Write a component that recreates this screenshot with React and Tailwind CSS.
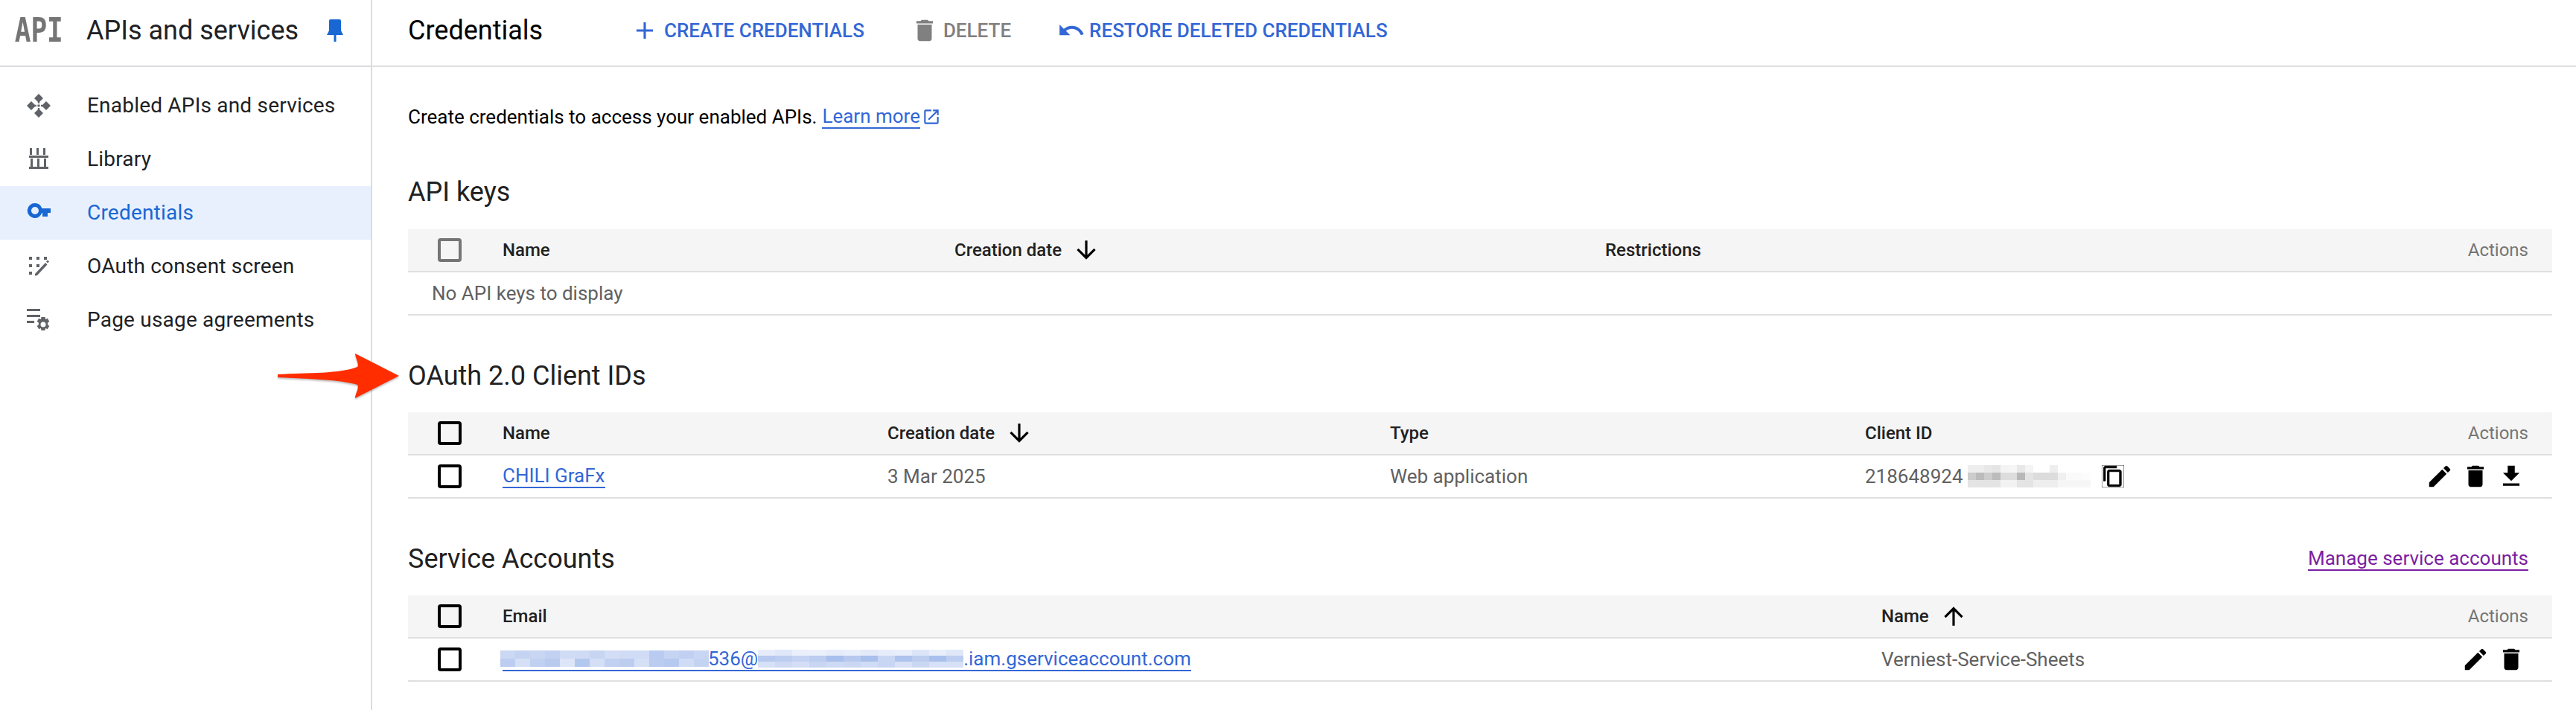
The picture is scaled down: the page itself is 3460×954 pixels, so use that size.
import React from "react";
import { MdAdd, MdDelete, MdUndo, MdEdit, MdFileDownload, MdContentCopy, MdArrowDownward, MdArrowUpward, MdOpenInNew } from "react-icons/md";

const font = "[font-family:Roboto,'Liberation_Sans',sans-serif]";

function EnabledIcon() {
  return (
    <svg viewBox="0 0 32 32" className="w-8 h-8" fill="#5f6368">
      <path d="M16 0l6 6-6 6-6-6zM16 20l6 6-6 6-6-6zM6 10l6 6-6 6-6-6zM26 10l6 6-6 6-6-6z" />
      <rect x="14.5" y="14.5" width="3" height="3" />
      <rect x="14.8" y="10.5" width="2.4" height="2.4" />
      <rect x="14.8" y="19" width="2.4" height="2.4" />
      <rect x="10.5" y="14.8" width="2.4" height="2.4" />
      <rect x="19" y="14.8" width="2.4" height="2.4" />
    </svg>
  );
}
function LibraryIcon() {
  return (
    <svg viewBox="0 0 32 32" className="w-8 h-8" fill="#5f6368">
      <path d="M4 1h3v9H4zM13 1h3v9h-3zM22 1h3v9h-3zM3 11h26v3H3zM5 15h3v12H5zM14 15h3v12h-3zM23 15h3v12h-3zM3 26h26v3H3z" />
    </svg>
  );
}
function KeyIcon() {
  return (
    <svg viewBox="0 0 32 32" className="w-8 h-8" fill="#1967d2">
      <path fillRule="evenodd" d="M11 4a10 10 0 0 1 9.300 7H32v6h-4v5h-7v-5h-.7A10 10 0 1 1 11 4zm0 5a5 5 0 1 0 0 10 5 5 0 0 0 0-10z" transform="translate(0 -1)" />
    </svg>
  );
}
function OauthIcon() {
  return (
    <svg viewBox="0 0 32 32" className="w-8 h-8" fill="#5f6368">
      <path d="M3 3h4v4H3zM13 3h4v4h-4zM23 3h4v4h-4zM3 13h4v4H3zM13 13h4v4h-4zM3 23h4v4H3zM11 26l14-15 2.500 2.500L14 28l-3 .5zM26 9.500l2-2 2 2-2 2z" />
    </svg>
  );
}
function UsageIcon() {
  return (
    <svg viewBox="0 0 32 32" className="w-8 h-8" fill="#5f6368">
      <path d="M0 1h18v3H0zM0 9h18v3H0zM0 17h10v3H0z" />
      <path fillRule="evenodd" d="M19.500 12h5l.6 3 2.700-1.200 2.500 4.200-2.300 1.800.2 1.200-.2 1.200 2.300 1.800-2.500 4.200-2.700-1.200-.6 3h-5l-.6-3-2.700 1.200-2.500-4.200 2.300-1.800-.2-1.200.2-1.200-2.300-1.800 2.500-4.200 2.700 1.200zm2.500 6.500a3.500 3.500 0 1 0 0 7 3.500 3.500 0 0 0 0-7z" />
    </svg>
  );
}
function PinIcon() {
  return (
    <svg viewBox="0 0 22 30" className="w-[22px] h-[30px]" fill="#1967d2">
      <path d="M5 0h12a2 2 0 0 1 2 2v13l3 6H0l3-6V2a2 2 0 0 1 2-2zM9.500 21h3v9h-3z" />
    </svg>
  );
}

function Checkbox({ gray }) {
  return <div className={"w-8 h-8 rounded-[4px] border-[4px] bg-transparent " + (gray ? "border-[#757575]" : "border-black")} />;
}

function Mosaic({ cols, cell, cellH, colors, className }) {
  return (
    <span className={"inline-grid shrink-0 " + (className || "")} style={{ gridTemplateColumns: `repeat(${cols}, ${cell}px)`, gridAutoRows: `${cellH}px` }}>
      {colors.map((c, i) => (
        <span key={i} style={{ backgroundColor: c }} />
      ))}
    </span>
  );
}

function NavRow({ icon, label, active }) {
  return (
    <div className={"flex items-center h-[72px] " + (active ? "bg-[#e8f0fe] text-[#1967d2]" : "text-[#202124]")}>
      <div className="w-[117px] pl-[36px] shrink-0">{icon}</div>
      <span className="text-[28px] tracking-[0.2px]">{label}</span>
    </div>
  );
}

function Heading({ children }) {
  return <h2 className="text-[36px] leading-[44px] text-[#212121]">{children}</h2>;
}

function HeadRow({ gray, children }) {
  return (
    <div className="flex items-center h-[58px] bg-[#f5f5f5] border-b-2 border-[#e0e0e0] text-[24px] font-medium text-[#212121] pr-8">
      <div className="w-[127px] pl-10 shrink-0"><Checkbox gray={gray} /></div>
      {children}
      <span className="ml-auto font-normal text-[#757575]">Actions</span>
    </div>
  );
}

function BodyRow({ children }) {
  return (
    <div className="flex items-center h-[58px] border-b-2 border-[#e0e0e0] text-[26px] text-[#616161] pr-[36px]">
      <div className="w-[127px] pl-10 shrink-0"><Checkbox /></div>
      {children}
    </div>
  );
}

function Sort({ up }) {
  const I = up ? MdArrowUpward : MdArrowDownward;
  return <I className="w-[38px] h-[38px] ml-3.5 text-black" />;
}

const blueA = ["#cbd8f3","#c5d3f2","#c8d5f3","#c2d1f1","#d0dcf5","#cfdbf5","#c7d5f3","#d3def6","#d0dcf5","#d0dcf5","#b9cbf0","#c6d4f3","#c0cff2","#c9d6f3",
  "#bccdf0","#d5e0f6","#c0d0f1","#b8cbef","#dde5f8","#b3c8ef","#d4dff6","#c2d1f2","#bdcdf0","#d5e0f6","#bbccf0","#b6c9ef","#d0dcf5","#c5d3f2"];
const blueB = ["#e6ecfa","#dfe7f8","#eaeffb","#ecf0fb","#e6ecfa","#e8eefa","#e2e9f9","#e6ecfa","#e8eefa","#dce5f8","#e8eefa","#dfe7f8",
  "#b7c9ef","#bccdf0","#c5d3f2","#bccdf0","#a9c0ec","#b7c9ef","#a9c0ec","#c8d5f3","#aec3ed","#bccdf0","#a9c0ec","#bccdf0",
  "#d6e0f6","#ced9f4","#d4def6","#c8d5f3","#ced9f4","#cad7f3","#d0dbf5","#c8d5f3","#d8e1f7","#cad7f3","#d6e0f6","#d6e0f6"];
const grayC = ["#eeeeee","#eeeeee","#e8e8e8","#e4e4e4","#f4f4f4","#f6f6f6","#e8e8e8","#f4f4f4","#ffffff","#ffffff","#eeeeee","#ffffff","#ffffff","#ffffff","#ffffff",
  "#cccccc","#bbbbbb","#cccccc","#bbbbbb","#dddddd","#dddddd","#b8b8b8","#e4e4e4","#dcdcdc","#dcdcdc","#dcdcdc","#f0f0f0","#fafafa","#fafafa","#fcfcfc",
  "#e4e4e4","#e4e4e4","#e4e4e4","#e4e4e4","#f2f2f2","#f2f2f2","#e4e4e4","#e4e4e4","#eeeeee","#eeeeee","#eeeeee","#f6f6f6","#f6f6f6","#f6f6f6","#f6f6f6"];

export default function App() {
  return (
    <div className={"flex w-[3460px] h-[954px] bg-white overflow-hidden text-[#202124] " + font}>
      <aside className="w-[500px] shrink-0 border-r-2 border-[#dadce0]">
        <div className="flex items-center h-[90px] border-b-2 border-[#dadce0] pb-[6px] pr-[37px]">
          <span className="w-[117px] pl-[24px] shrink-0 text-[44px] leading-none font-bold text-[#757575] origin-left scale-x-[0.82] [font-family:'DejaVu_Sans_Mono',monospace]">API</span>
          <span className="text-[36px] leading-[44px] -ml-[1px]">APIs and services</span>
          <span className="ml-auto flex"><PinIcon /></span>
        </div>
        <nav className="pt-[16px]">
          <NavRow icon={<EnabledIcon />} label="Enabled APIs and services" />
          <NavRow icon={<LibraryIcon />} label="Library" />
          <NavRow icon={<KeyIcon />} label="Credentials" active />
          <NavRow icon={<OauthIcon />} label="OAuth consent screen" />
          <NavRow icon={<UsageIcon />} label="Page usage agreements" />
        </nav>
      </aside>

      <main className="flex-1 min-w-0">
        <div className="flex items-center h-[90px] border-b-2 border-[#e0e0e0] pb-[6px] pl-[48px]">
          <span className="text-[36px] leading-[44px] text-black w-[299px] shrink-0">Credentials</span>
          <button className="flex items-center text-[26px] font-medium text-[#3367d6]"><MdAdd className="w-[38px] h-[38px] mr-[7px]" />CREATE CREDENTIALS</button>
          <button className="flex items-center ml-[62px] text-[26px] font-medium text-[#808080]"><MdDelete className="w-[38px] h-[38px] mr-[6px]" />DELETE</button>
          <button className="flex items-center ml-[62px] text-[26px] font-medium text-[#3367d6]"><MdUndo className="w-[38px] h-[38px] mr-[5px]" />RESTORE DELETED CREDENTIALS</button>
        </div>

        <div className="relative pl-[48px] pr-[32px]">
          <p className="pt-[50px] text-[26px] leading-[34px] text-black flex items-center">
            <span>Create credentials to access your enabled APIs.</span>
            <a className="ml-[7px] leading-[30px] text-[#3367d6] border-b-2 border-[#3367d6]">Learn more</a>
            <MdOpenInNew className="w-[26px] h-[26px] ml-[2px] text-[#3367d6]" />
          </p>

          <section className="mt-[62px]">
            <Heading>API keys</Heading>
            <div className="mt-[28px]">
              <HeadRow gray>
                <span className="w-[607px] shrink-0">Name</span>
                <span className="flex items-center w-[874px] shrink-0">Creation date<Sort /></span>
                <span>Restrictions</span>
              </HeadRow>
              <div className="flex items-center h-[58px] border-b-2 border-[#e0e0e0] text-[26px] text-[#616161] pl-8">No API keys to display</div>
            </div>
          </section>

          <section className="mt-[59px]">
            <Heading>OAuth 2.0 Client IDs</Heading>
            <div className="mt-[27px]">
              <HeadRow>
                <span className="w-[517px] shrink-0">Name</span>
                <span className="flex items-center w-[675px] shrink-0">Creation date<Sort /></span>
                <span className="w-[638px] shrink-0">Type</span>
                <span>Client ID</span>
              </HeadRow>
              <BodyRow>
                <span className="w-[517px] shrink-0 flex"><a className="leading-[30px] text-[#3367d6] border-b-2 border-[#3367d6]">CHILI GraFx</a></span>
                <span className="w-[675px] shrink-0">3 Mar 2025</span>
                <span className="w-[638px] shrink-0">Web application</span>
                <span className="flex items-center">
                  218648924
                  <Mosaic cols={15} cell={11} cellH={10} colors={grayC} className="ml-[6px]" />
                  <MdContentCopy className="w-[30px] h-[30px] ml-[15px] text-black stroke-[0.6px] stroke-current" />
                </span>
                <span className="flex items-center gap-[10px] ml-auto text-black">
                  <MdEdit className="w-[38px] h-[38px]" /><MdDelete className="w-[38px] h-[38px]" /><MdFileDownload className="w-[38px] h-[38px]" />
                </span>
              </BodyRow>
            </div>
          </section>

          <section className="mt-[59px]">
            <div className="flex items-center justify-between pr-8">
              <Heading>Service Accounts</Heading>
              <a className="text-[26px] leading-[30px] text-[#7b1fa2] border-b-2 border-[#7b1fa2]">Manage service accounts</a>
            </div>
            <div className="mt-[27px]">
              <HeadRow>
                <span className="w-[1852px] shrink-0">Email</span>
                <span className="flex items-center">Name<Sort up /></span>
              </HeadRow>
              <BodyRow>
                <span className="w-[1852px] shrink-0 flex">
                  <a className="flex items-center leading-[30px] text-[#3367d6] border-b-2 border-[#3367d6]">
                    <Mosaic cols={14} cell={20} cellH={11} colors={blueA} className="-ml-[3px] -mr-[1px]" />
                    536@
                    <Mosaic cols={12} cell={23} cellH={8} colors={blueB} />
                    .iam.gserviceaccount.com
                  </a>
                </span>
                <span>Verniest-Service-Sheets</span>
                <span className="flex items-center gap-[10px] ml-auto text-black">
                  <MdEdit className="w-[38px] h-[38px]" /><MdDelete className="w-[38px] h-[38px]" />
                </span>
              </BodyRow>
            </div>
          </section>

          <svg viewBox="0 0 164 62" className="absolute left-[-127px] top-[385px] w-[164px] h-[62px] drop-shadow-[0_2px_1px_rgba(0,0,0,0.25)]">
            <path fill="#ff2d00" d="M0 28C40 26 85 27 107 18C110 15 104 5 104 0L163 30L104 60C104 54 110 46 107 42C85 35 40 34 0 32Z" />
          </svg>
        </div>
      </main>
    </div>
  );
}
